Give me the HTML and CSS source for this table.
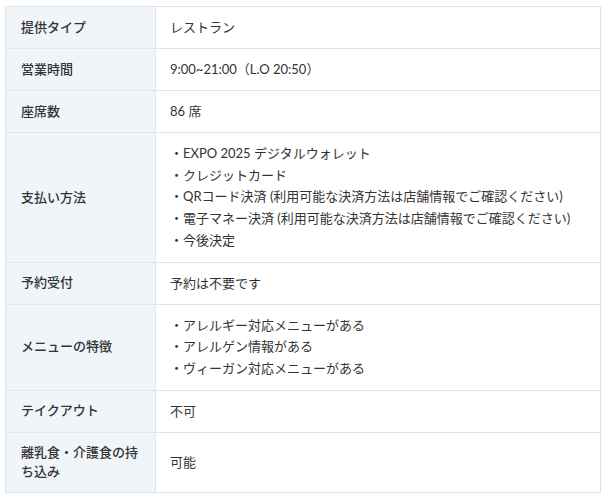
FILE: index.html
```html
<!DOCTYPE html>
<html lang="ja">
<head>
<meta charset="utf-8">
<link rel="stylesheet" href="styles.css">
</head>
<body>
<div class="wrap">
<table class="info">
  <tr><th>提供タイプ</th><td>レストラン</td></tr>
  <tr><th>営業時間</th><td>9:00~21:00（L.O 20:50）</td></tr>
  <tr><th>座席数</th><td>86 席</td></tr>
  <tr><th>支払い方法</th><td>
    <ul class="list">
      <li>・EXPO 2025 デジタルウォレット</li>
      <li>・クレジットカード</li>
      <li>・QRコード決済 (利用可能な決済方法は店舗情報でご確認ください)</li>
      <li>・電子マネー決済 (利用可能な決済方法は店舗情報でご確認ください)</li>
      <li>・今後決定</li>
    </ul>
  </td></tr>
  <tr><th>予約受付</th><td>予約は不要です</td></tr>
  <tr><th>メニューの特徴</th><td>
    <ul class="list">
      <li>・アレルギー対応メニューがある</li>
      <li>・アレルゲン情報がある</li>
      <li>・ヴィーガン対応メニューがある</li>
    </ul>
  </td></tr>
  <tr><th>テイクアウト</th><td>不可</td></tr>
  <tr><th>離乳食・介護食の持ち込み</th><td>可能</td></tr>
</table>
</div>
</body>
</html>
```

FILE: styles.css
```css
html, body {
  margin: 0;
  padding: 0;
  background: #fff;
}
.wrap {
  padding: 6px 8px 0 5px;
}
.info {
  width: 596px;
  border-collapse: collapse;
  font-family: Lato, "Noto Sans CJK JP", sans-serif;
  font-size: 13px;
  color: #333;
}
.info th, .info td {
  border: 1px solid #e2e4e7;
  padding: 10px 14px;
  vertical-align: middle;
  text-align: left;
}
.info th {
  width: 120px;
  background: #f0f5fa;
  font-weight: 500;
  line-height: 19.5px;
  padding-left: 15px;
}
.info td {
  font-weight: 400;
  line-height: 21px;
}
.list {
  list-style: none;
  margin: 0;
  padding: 0;
}
.list li {
  line-height: 21.7px;
}
```
